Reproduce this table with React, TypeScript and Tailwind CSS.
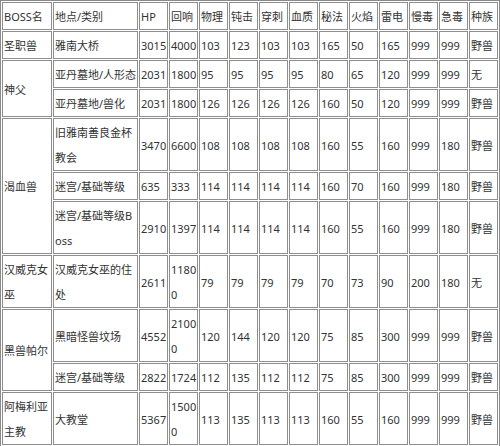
import React from "react";

type Row = {
  boss?: { name: string; span: number };
  cells: string[];
};

const header = ["BOSS名", "地点/类别", "HP", "回响", "物理", "钝击", "穿刺", "血质", "秘法", "火焰", "雷电", "慢毒", "急毒", "种族"];

const rows: Row[] = [
  { boss: { name: "圣职兽", span: 1 }, cells: ["雅南大桥", "3015", "4000", "103", "123", "103", "103", "165", "50", "165", "999", "999", "野兽"] },
  { boss: { name: "神父", span: 2 }, cells: ["亚丹墓地/人形态", "2031", "1800", "95", "95", "95", "95", "80", "65", "120", "999", "999", "无"] },
  { cells: ["亚丹墓地/兽化", "2031", "1800", "126", "126", "126", "126", "160", "50", "120", "999", "999", "野兽"] },
  { boss: { name: "渴血兽", span: 3 }, cells: ["旧雅南善良金杯教会", "3470", "6600", "108", "108", "108", "108", "160", "55", "160", "999", "180", "野兽"] },
  { cells: ["迷宫/基础等级", "635", "333", "114", "114", "114", "114", "160", "70", "160", "999", "180", "野兽"] },
  { cells: ["迷宫/基础等级Boss", "2910", "1397", "114", "114", "114", "114", "160", "55", "160", "999", "180", "野兽"] },
  { boss: { name: "汉威克女巫", span: 1 }, cells: ["汉威克女巫的住处", "2611", "11800", "79", "79", "79", "79", "70", "73", "90", "200", "180", "无"] },
  { boss: { name: "黑兽帕尔", span: 2 }, cells: ["黑暗怪兽坟场", "4552", "21000", "120", "144", "120", "120", "75", "85", "300", "999", "999", "野兽"] },
  { cells: ["迷宫/基础等级", "2822", "1724", "112", "135", "112", "112", "75", "85", "300", "999", "999", "野兽"] },
  { boss: { name: "阿梅利亚主教", span: 1 }, cells: ["大教堂", "5367", "15000", "113", "135", "113", "113", "160", "55", "160", "999", "999", "野兽"] },
];

const cellCls = "border border-[#8e8e8e] pl-px pr-0 pt-px pb-0 text-left align-middle font-normal break-all";

export default function App() {
  return (
    <div className="w-[500px] h-[446px] overflow-hidden bg-white">
      <table className="w-[500px] table-fixed border-separate border-spacing-[1px] border border-[#8a8a8a] bg-white text-[11px] leading-[25px] text-[#333] font-['Noto_Sans','Noto_Sans_CJK_SC',sans-serif]">
        <thead>
          <tr>
            {header.map((h, i) => (
              <th
                key={h}
                className={`${cellCls} ${i === 0 ? "w-[50px]" : i === 1 ? "w-[85px]" : "w-[29px]"}`}
              >
                {h}
              </th>
            ))}
          </tr>
        </thead>
        <tbody>
          {rows.map((r, ri) => (
            <tr key={ri}>
              {r.boss && (
                <td rowSpan={r.boss.span} className={cellCls}>
                  {r.boss.name}
                </td>
              )}
              {r.cells.map((c, ci) => (
                <td key={ci} className={cellCls}>
                  {c}
                </td>
              ))}
            </tr>
          ))}
          <tr>
            {header.map((h) => (
              <td key={h} className={cellCls}>
                &nbsp;
              </td>
            ))}
          </tr>
        </tbody>
      </table>
    </div>
  );
}
